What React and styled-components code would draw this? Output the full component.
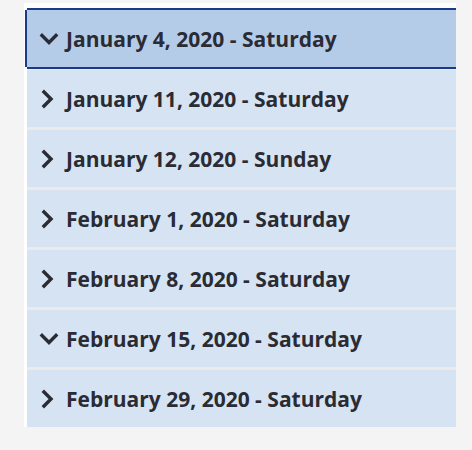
import React from 'react';
import styled, { createGlobalStyle } from 'styled-components';

const GlobalStyle = createGlobalStyle`
  html, body {
    margin: 0;
    padding: 0;
    background: #f4f4f4;
  }
`;

const days = [
  { label: 'January 4, 2020 - Saturday', open: true, active: true },
  { label: 'January 11, 2020 - Saturday' },
  { label: 'January 12, 2020 - Sunday' },
  { label: 'February 1, 2020 - Saturday' },
  { label: 'February 8, 2020 - Saturday' },
  { label: 'February 15, 2020 - Saturday', open: true },
  { label: 'February 29, 2020 - Saturday' },
];

function Chevron({ open }) {
  if (open) {
    return (
      <svg width="20" height="20" viewBox="0 0 20 20">
        <polyline points="3,6.5 10,13.5 17,6.5" fill="none" stroke="#2b2b33" strokeWidth="3.4" strokeLinecap="square" />
      </svg>
    );
  }
  return (
    <svg width="20" height="20" viewBox="0 0 20 20">
      <polyline points="5,3 12,10 5,17" fill="none" stroke="#2b2b33" strokeWidth="3.4" strokeLinecap="square" />
    </svg>
  );
}

function App() {
  return (
    <Page>
      <GlobalStyle />
      <Panel>
        {days.map((d) => (
          <Row key={d.label} active={d.active}>
            <Icon><Chevron open={d.open} /></Icon>
            <Label>{d.label}</Label>
          </Row>
        ))}
      </Panel>
    </Page>
  );
}

const Page = styled.div`
  padding: 3px 16px 24px 24px;
`;

const Panel = styled.div`
  width: 429px;
  background: #ebebeb;
  border-left: 3px solid #fff;
  border-top: 7px solid #fff;
  display: flex;
  flex-direction: column;
  gap: 3px;
`;

const Row = styled.div`
  height: 57px;
  display: flex;
  align-items: center;
  padding-left: 12px;
  background: ${(p) => (p.active ? '#b5cce9' : '#d5e3f3')};
  box-shadow: ${(p) =>
    p.active ? '-2px 0 0 #1b3a87, 0 -2px 0 #1b3a87, 0 2px 0 #1b3a87' : 'none'};
  font-family: "Open Sans", "Noto Sans", sans-serif;
  font-weight: 700;
  font-size: 21px;
  color: #2b2b33;
`;

const Icon = styled.span`
  display: flex;
  width: 20px;
  height: 20px;
  margin-right: 7px;
`;

const Label = styled.span`
  white-space: nowrap;
`;

export default App;
